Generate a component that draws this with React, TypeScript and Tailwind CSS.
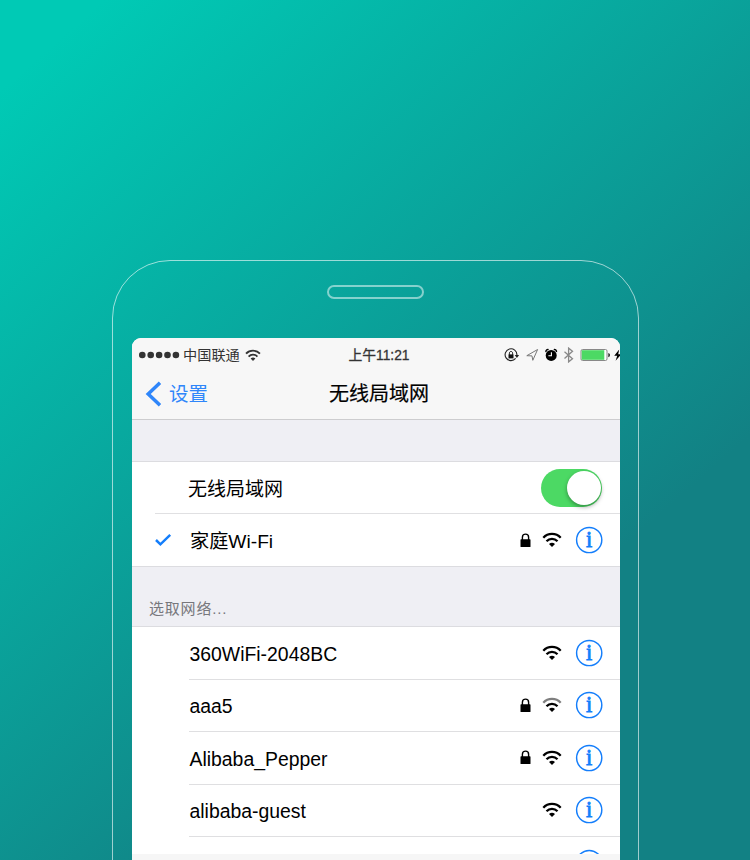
import React from "react";

function WifiIcon({ className = "", weak = false, width = 20, height = 16 }: { className?: string; weak?: boolean; width?: number; height?: number }) {
  return (
    <svg className={className} width={width} height={height} viewBox="0 0 20 16" fill="none" stroke="currentColor" strokeWidth="2.3">
      <path d="M1.3 5.7C6 .7 14 .7 18.7 5.7" opacity={weak ? 0.5 : 1} />
      <path d="M4.5 9.3C7.6 6 12.4 6 15.5 9.3" />
      <path d="M7 11.9Q10 9.4 13 11.9L10 14.9Z" fill="currentColor" stroke="none" />
    </svg>
  );
}

function LockIcon() {
  return (
    <svg width="11" height="15" viewBox="0 0 11 15" fill="none">
      <path d="M2.4 7V4.2C2.4 .1 8.6 .1 8.6 4.2V7" stroke="#000" strokeWidth="1.4" />
      <rect x="0.5" y="6.3" width="10" height="7.7" rx="0.6" fill="#000" />
    </svg>
  );
}

function InfoIcon({ ringOnly = false }: { ringOnly?: boolean }) {
  return (
    <svg width="28" height="28" viewBox="0 0 28 28">
      <circle cx="14.2" cy="14" r="12.6" fill="none" stroke="#147efb" strokeWidth="1.45" />
      {!ringOnly && (
        <text x="14.2" y="21" textAnchor="middle" fill="#147efb" stroke="#147efb" strokeWidth="0.8" fontSize="22.5" className="font-['Liberation_Serif',serif]">i</text>
      )}
    </svg>
  );
}

function StatusIcons() {
  return (
    <svg width="118" height="20" viewBox="0 0 118 20" fill="none">
      <path d="M13.6 13.4A5.9 5.9 0 1 1 14.9 10" stroke="#222" strokeWidth="1.1" />
      <path d="M12.7 9.9h4.4l-2.2 3z" fill="#222" />
      <path d="M7.4 9.8V8.2c0-2.3 3.2-2.3 3.2 0v1.6" stroke="#111" strokeWidth="1" />
      <rect x="6.5" y="9.4" width="5" height="4" fill="#111" />
      <path d="M24.8 10.7L35.6 4.5L30.8 15.3L30 10.9Z" stroke="#777" strokeWidth="1" strokeLinejoin="round" />
      <circle cx="49.2" cy="10.4" r="5.5" fill="#000" />
      <path d="M44 7a2 2 0 0 1 2.6-2.4M51.8 4.6A2 2 0 0 1 54.4 7" stroke="#000" strokeWidth="1.5" />
      <path d="M49.4 7.3v3.4h-3" stroke="#fff" strokeWidth="1.1" />
      <path d="M62.5 6.8L70.5 13.7L66.6 16.8V3.2L70.5 6.3L62.5 13.6" stroke="#8a8a8a" strokeWidth="1.3" />
      <rect x="79" y="4.5" width="26" height="11" rx="1.5" fill="#fff" stroke="#888" />
      <rect x="79.7" y="5.2" width="22.6" height="9.6" fill="#4cd964" />
      <path d="M106.3 8v4.2q1.7-.4 1.7-2.1t-1.7-2.1z" fill="#222" />
      <path d="M117.2 4.4L112.2 10.8H115.2L113.6 15.8L119.4 9.2H116.2Z" fill="#000" />
    </svg>
  );
}

type Network = { name: string; locked?: boolean; weak?: boolean };

const networks: Network[] = [
  { name: "360WiFi-2048BC" },
  { name: "aaa5", locked: true, weak: true },
  { name: "Alibaba_Pepper", locked: true },
  { name: "alibaba-guest" },
];

function RowIcons({ locked, weak }: Omit<Network, "name">) {
  return (
    <div className="flex items-center pr-[17px]">
      {locked && <LockIcon />}
      <WifiIcon className="ml-[11px] mr-[13px]" weak={weak} />
      <InfoIcon />
    </div>
  );
}

export default function App() {
  return (
    <div className="flex h-[860px] w-[750px] justify-center overflow-hidden bg-[linear-gradient(139deg,#00cab5_6%,#128184_72%)] pt-[260px] font-['Liberation_Sans','Noto_Sans_CJK_SC',sans-serif] text-black">
      <div className="ml-px flex h-[700px] w-[527px] shrink-0 flex-col items-center rounded-t-[58px] border border-white/60 pt-6">
        <div className="h-[14px] w-[97px] shrink-0 rounded-full border-2 border-white/50" />
        <div className="ml-px mt-[39px] flex h-[522px] w-[488px] shrink-0 flex-col overflow-hidden rounded-t-[9px] bg-white">
          <header className="h-[82px] shrink-0 border-b border-[#cdcdcf] bg-[#f7f7f7]">
            <div className="grid h-[34px] grid-cols-[1fr_auto_1fr] items-center text-[#333]">
              <div className="flex items-center pl-[7px]">
                <svg width="41" height="8" viewBox="0 0 41 8" fill="#333">
                  <circle cx="3.3" cy="4" r="3.3" />
                  <circle cx="11.7" cy="4" r="3.3" />
                  <circle cx="20.1" cy="4" r="3.3" />
                  <circle cx="28.5" cy="4" r="3.3" />
                  <circle cx="36.9" cy="4" r="3.3" />
                </svg>
                <span className="ml-[3px] text-[14.2px] leading-5">中国联通</span>
                <WifiIcon className="ml-[5px]" width={16} height={13} />
              </div>
              <span className="pl-1.5 pt-[2px] text-[13.8px] leading-5 [-webkit-text-stroke:0.3px_#333]">上午11:21</span>
              <div className="flex justify-end">
                <StatusIcons />
              </div>
            </div>
            <div className="grid h-[44px] grid-cols-[1fr_auto_1fr] items-center">
              <div className="flex items-center pl-[13px] text-[#2f86fa]">
                <svg width="17" height="26" viewBox="0 0 17 26" fill="none" stroke="#2f86fa" strokeWidth="3.5">
                  <path d="M15 1.8L3.2 13L15 24.2" />
                </svg>
                <span className="ml-[7px] text-[19.5px] leading-7">设置</span>
              </div>
              <h1 className="pl-1.5 text-[20px] font-normal leading-7 [-webkit-text-stroke:0.2px_#000]">无线局域网</h1>
              <div />
            </div>
          </header>
          <div className="h-[41px] shrink-0 bg-[#efeff4]" />
          <section className="h-[106px] shrink-0 border-y border-[#dcdce0]">
            <div className="flex h-[51px] items-center justify-between pl-[56px] pr-[17px]">
              <span className="pt-[4px] text-[19px] leading-7">无线局域网</span>
              <div className="mr-px flex h-[38px] w-[61px] items-center justify-end rounded-full bg-[#4cd964] pr-px">
                <div className="h-[34px] w-[34px] rounded-full bg-white shadow-[0_2px_4px_rgba(0,0,0,0.35)]" />
              </div>
            </div>
            <div className="ml-[23px] flex h-[53px] items-center border-t border-[#e0e0e2]">
              <svg width="17" height="14" viewBox="0 0 17 14" fill="none" stroke="#147efb" strokeWidth="2.5">
                <path d="M1 7L5.4 11.3L15.2 1.8" />
              </svg>
              <span className="ml-[18px] flex-1 pt-[3px] text-[19.2px] leading-7">家庭Wi-Fi</span>
              <RowIcons locked />
            </div>
          </section>
          <div className="flex h-[59px] shrink-0 items-end bg-[#efeff4] pb-[5px] pl-[17px]">
            <span className="text-[15px] leading-6 tracking-[0.8px] text-[#77777c]">选取网络...</span>
          </div>
          <section className="h-[228px] shrink-0 overflow-hidden border-t border-[#dcdce0]">
            {networks.map((n) => (
              <div key={n.name} className="ml-[57px] flex h-[52.5px] items-center justify-between border-b border-[#dfdfe1]">
                <span className="pl-[0.5px] pt-[1.5px] text-[19.4px] leading-7">{n.name}</span>
                <RowIcons locked={n.locked} weak={n.weak} />
              </div>
            ))}
            <div className="ml-[57px] flex h-[52px] items-center justify-end pr-[17px]">
              <InfoIcon ringOnly />
            </div>
          </section>
          <div className="h-[6px] shrink-0 bg-[#f6f6f6]" />
        </div>
      </div>
    </div>
  );
}
